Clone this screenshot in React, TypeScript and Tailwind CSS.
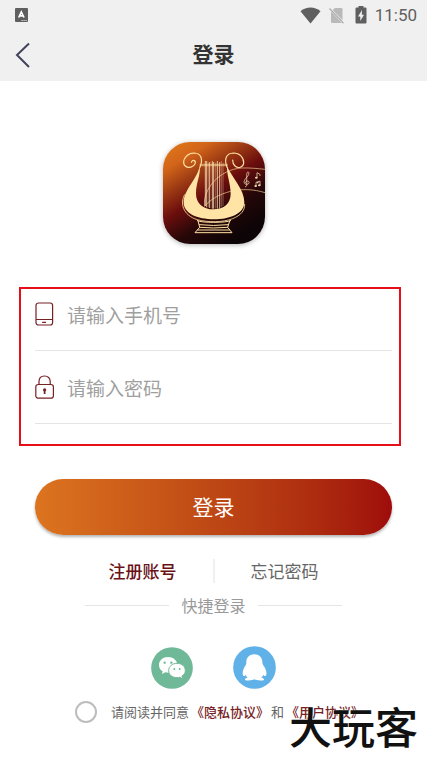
import { useState } from 'react'
import type { ReactNode } from 'react'

function StatusBar() {
  return (
    <div className="flex h-7 items-center justify-between pt-0.5 pr-2.5 pl-[15px] text-[#5f5f5f]">
      <svg className="h-[14px] w-[13px]" viewBox="0 0 13 14">
        <rect width="13" height="14" rx="1" fill="currentColor" />
        <path d="M3.7 9.5L6.3 4L9 9.5M4.8 7.8H8" fill="none" stroke="#fff" strokeWidth="1.7" />
        <path d="M6.5 12.5H12" stroke="#ddd" strokeWidth="1" strokeDasharray="1.2 0.8" />
      </svg>
      <div className="flex items-center">
        <svg className="h-[17px] w-[21px]" viewBox="0 0 21 17">
          <path d="M0.5 4.2C6.5 -0.8 14.5 -0.8 20.5 4.2L10.5 16.6Z" fill="currentColor" />
        </svg>
        <svg className="ml-2 h-[17px] w-[15px]" viewBox="0 0 15 17">
          <path d="M6 1H12.5Q13.5 1 13.5 2V13.2L3.6 2.9ZM2 4.5V15Q2 16 3 16H12.8Z" fill="#b9b9b9" />
          <path d="M0.5 1.5L14.5 16.3" stroke="#b0b0b0" strokeWidth="1.3" />
        </svg>
        <svg className="ml-[11px] h-[18px] w-3" viewBox="0 0 12 18">
          <path d="M3.5 0H8.5V1.5H10.5Q11.5 1.5 11.5 2.5V16.5Q11.5 17.5 10.5 17.5H1.5Q0.5 17.5 0.5 16.5V2.5Q0.5 1.5 1.5 1.5H3.5Z" fill="currentColor" />
          <path d="M7 4L3 10.5H5.3V15L9 8.7H6.8Z" fill="#f0f0f0" />
        </svg>
        <span className="ml-2 font-[Roboto,sans-serif] text-[17px] leading-5">11:50</span>
      </div>
    </div>
  )
}

function LyreLogo() {
  return (
    <svg className="h-[102px] w-[102px] rounded-[27px] shadow-[0_1px_5px_rgba(0,0,0,0.3)]" viewBox="27 30 306 306" role="img" aria-label="Lyre">
      <defs>
        <linearGradient id="night" x1="0.12" y1="0" x2="0.72" y2="0.95">
          <stop offset="0" stopColor="#df7519" />
          <stop offset="0.16" stopColor="#d2651a" />
          <stop offset="0.34" stopColor="#9c3a13" />
          <stop offset="0.52" stopColor="#6c0e0d" />
          <stop offset="0.74" stopColor="#260708" />
          <stop offset="1" stopColor="#0c0406" />
        </linearGradient>
      </defs>
      <rect x="27" y="30" width="306" height="306" fill="url(#night)" />
      <g stroke="#f3dfb4" strokeWidth="2.5">
        <path d="M154 87V222M158 87V226M167 90V228M175 87V230M179 90V230M190 87V230M197 90V229" />
        <path d="M163 92V226M185 92V230M202 87V225M207 92V222" opacity="0.45" />
      </g>
      <g fill="none" stroke="#ffe0a0" strokeLinecap="round">
        <path d="M138 97H220M138 101H220" strokeWidth="2" />
        <path d="M138 106C147 82 143 64 120 63C102 63 88 78 89 93C91 107 106 109 116 103C125 97 127 87 119 85C115 84 113 88 113 91" strokeWidth="3.5" />
        <path d="M219 106C210 82 216 64 238 63C258 63 270 78 269 93C268 107 252 110 243 102C237 97 236 87 236 84" strokeWidth="3.5" />
        <path d="M152 222C144 172 198 112 262 108C290 107 312 110 333 112" strokeWidth="2.5" opacity="0.75" />
        <path d="M152 222C188 181 262 159 333 182" strokeWidth="2.5" opacity="0.75" />
        <path d="M92 188C77 212 86 250 130 263C163 272 208 271 236 260C261 250 273 235 272 217" strokeWidth="2.5" />
        <path d="M130 266C140 273 218 273 230 266M132 266L137 286L123 302H234L221 286L227 267M136 278Q178 283 223 278M137 286Q178 290 221 286M131 294H226" strokeWidth="3" />
      </g>
      <path d="M137 102C141 128 126 150 126 185C126 214 148 232 178 232C210 232 230 214 230 186C230 154 218 130 219 102C234 137 271 172 271 211C271 245 229 262 180 262C129 262 89 244 89 211C89 173 130 142 137 102Z" fill="#ffe4a5" />
      <g fill="none" stroke="#f2deb5" strokeWidth="2.2">
        <path d="M273 164C280 165 278 154 278 143C278 131 277 119 283 120C288 125 281 133 274 141C267 151 271 157 279 157C287 156 287 148 281 147C274 147 273 153 277 154" />
        <path d="M309 137V122L318 127V132M306 162V151L318 147V159" />
      </g>
      <g fill="#f2deb5">
        <ellipse cx="307" cy="137" rx="4" ry="3" />
        <ellipse cx="305" cy="162" rx="4" ry="3" />
        <ellipse cx="316" cy="160" rx="4" ry="3" />
        <ellipse cx="311" cy="152" rx="3" ry="2" />
      </g>
    </svg>
  )
}

function PhoneIcon() {
  return (
    <svg className="h-6 w-5 shrink-0" viewBox="0 0 20 24" fill="none" stroke="#762124" strokeWidth="1.2">
      <rect x="1" y="1" width="16.6" height="22" rx="2.5" />
      <path d="M1 17.5H17.6M7.2 20.3H11" />
    </svg>
  )
}

function LockIcon() {
  return (
    <svg className="h-6 w-5 shrink-0" viewBox="0 0 20 24" fill="none" stroke="#762124" strokeWidth="1.2">
      <rect x="0.8" y="9.5" width="17.6" height="13.7" rx="2.5" />
      <path d="M4 9.5V6.5C4 3 6.4 1 9.6 1C12.8 1 15.2 3 15.2 6.5V9.5" />
      <path d="M9.6 15V19" strokeWidth="1.7" />
      <circle cx="9.6" cy="14.8" r="1.6" fill="#762124" stroke="none" />
    </svg>
  )
}

function WechatIcon() {
  return (
    <svg className="h-[42px] w-[42px]" viewBox="32 36 126 126">
      <circle cx="95" cy="99" r="62.5" fill="#6fb998" />
      <path d="M83 66C68 66 56 76 56 90C56 98 60 105 67 109L65 117L75 112C94 117 111 106 111 90C111 76 98 66 83 66Z" fill="#fff" />
      <path d="M110 85C96 85 85 94 85 107C85 119 96 128 110 128C113 128 116 128 119 127L126 132L125 123C131 119 135 114 135 107C135 94 124 85 110 85Z" fill="#fff" stroke="#6fb998" strokeWidth="3" />
      <g fill="#6fb998">
        <circle cx="73" cy="83" r="3.5" />
        <circle cx="93" cy="83" r="3.5" />
        <circle cx="102" cy="102" r="3" />
        <circle cx="118" cy="102" r="3" />
      </g>
    </svg>
  )
}

function QqIcon() {
  return (
    <svg className="h-[43px] w-[43px]" viewBox="279 35 129 129">
      <circle cx="343.5" cy="99.5" r="64" fill="#5fb1e8" />
      <path d="M343 60C328 60 318 71 319 85C319 92 314 95 311 103C307 112 307 122 311 125C314 126 316 123 317 121C318 125 320 128 323 130C316 131 314 134 315 136C318 140 338 139 343 135C349 139 369 140 372 136C373 134 371 131 364 130C367 127 369 124 370 121C371 123 374 126 377 125C381 121 380 111 376 103C373 95 368 92 367 85C368 71 358 60 343 60Z" fill="#fff" />
    </svg>
  )
}

interface FieldProps {
  id: string
  type: string
  label: string
  icon: ReactNode
}

function Field({ id, type, label, icon }: FieldProps) {
  return (
    <div className="flex h-[73px] items-center border-b border-[#e4e4e4]">
      <label htmlFor={id} aria-label={label}>{icon}</label>
      <input
        id={id}
        type={type}
        placeholder={label}
        className="ml-3 h-10 w-full min-w-0 text-[19px] leading-7 text-[#333] outline-none placeholder:text-[#9f9f9f]"
      />
    </div>
  )
}

export default function App() {
  const [agreed, setAgreed] = useState(false)

  return (
    <div className="relative min-h-screen bg-white font-['Noto_Sans_CJK_SC',sans-serif]">
      <header className="bg-[#f0f0f0]">
        <StatusBar />
        <div className="grid h-[53px] grid-cols-[48px_1fr_48px] items-center">
          <button className="flex h-12 items-center pl-[15px]" aria-label="返回">
            <svg className="h-[26px] w-4" viewBox="0 0 16 26" fill="none" stroke="#41435c" strokeWidth="2">
              <path d="M14 1.5L2 13L14 25" />
            </svg>
          </button>
          <h1 className="-mt-1 text-center text-[21px] leading-8 font-bold text-[#333]">登录</h1>
        </div>
      </header>

      <main>
        <div className="flex justify-center pt-[61px]">
          <LyreLogo />
        </div>

        <form onSubmit={(e) => e.preventDefault()}>
          <div className="mt-[43px] mr-[26px] ml-[19px] border-2 border-[#e60f19] pr-[7px] pb-5 pl-3.5">
            <div className="-mt-[11px]">
              <Field id="phone" type="tel" label="请输入手机号" icon={<PhoneIcon />} />
              <Field id="password" type="password" label="请输入密码" icon={<LockIcon />} />
            </div>
          </div>

          <div className="px-[35px] pt-[33px]">
            <button
              type="submit"
              className="h-14 w-full rounded-full bg-linear-to-r from-[#dc741f] to-[#9f0b0b] text-[21px] text-white shadow-[0_2px_3px_rgba(0,0,0,0.3)]"
            >
              登录
            </button>
          </div>
        </form>

        <div className="mt-6 flex items-center justify-center text-[17px] leading-6">
          <a href="#register" className="font-medium text-[#6a1115]">注册账号</a>
          <span className="mx-9 h-6 w-0.5 bg-[#f0f0f0]" />
          <a href="#forgot" className="text-[#666]">忘记密码</a>
        </div>

        <div className="mt-2.5 flex items-center justify-center gap-3 text-base leading-6 text-[#999]">
          <span className="h-px w-[84px] bg-[#e4e4e4]" />
          <span>快捷登录</span>
          <span className="h-px w-[84px] bg-[#e4e4e4]" />
        </div>

        <div className="mt-[29px] flex items-center justify-center gap-10">
          <button aria-label="微信"><WechatIcon /></button>
          <button aria-label="QQ"><QqIcon /></button>
        </div>

        <div className="mt-[11px] flex items-center justify-center pl-3 text-[13px] leading-6 text-[#666]">
          <input
            id="agree"
            type="checkbox"
            checked={agreed}
            onChange={() => setAgreed(!agreed)}
            className="h-[22px] w-[22px] appearance-none rounded-full border-2 border-[#bdbdbd] checked:bg-[#762124]"
          />
          <div className="ml-3.5 flex gap-0.5">
            <label htmlFor="agree">请阅读并同意</label>
            <a href="#privacy" className="font-medium text-[#762124]">《隐私协议》</a>
            <span>和</span>
            <a href="#terms" className="font-medium text-[#762124]">《用户协议》</a>
          </div>
        </div>
      </main>

      <div className="pointer-events-none absolute right-[9px] bottom-[7px] text-[43px] leading-[56px] font-medium text-[#111] [text-shadow:0_0_2px_#fff]">
        大玩客
      </div>
    </div>
  )
}
